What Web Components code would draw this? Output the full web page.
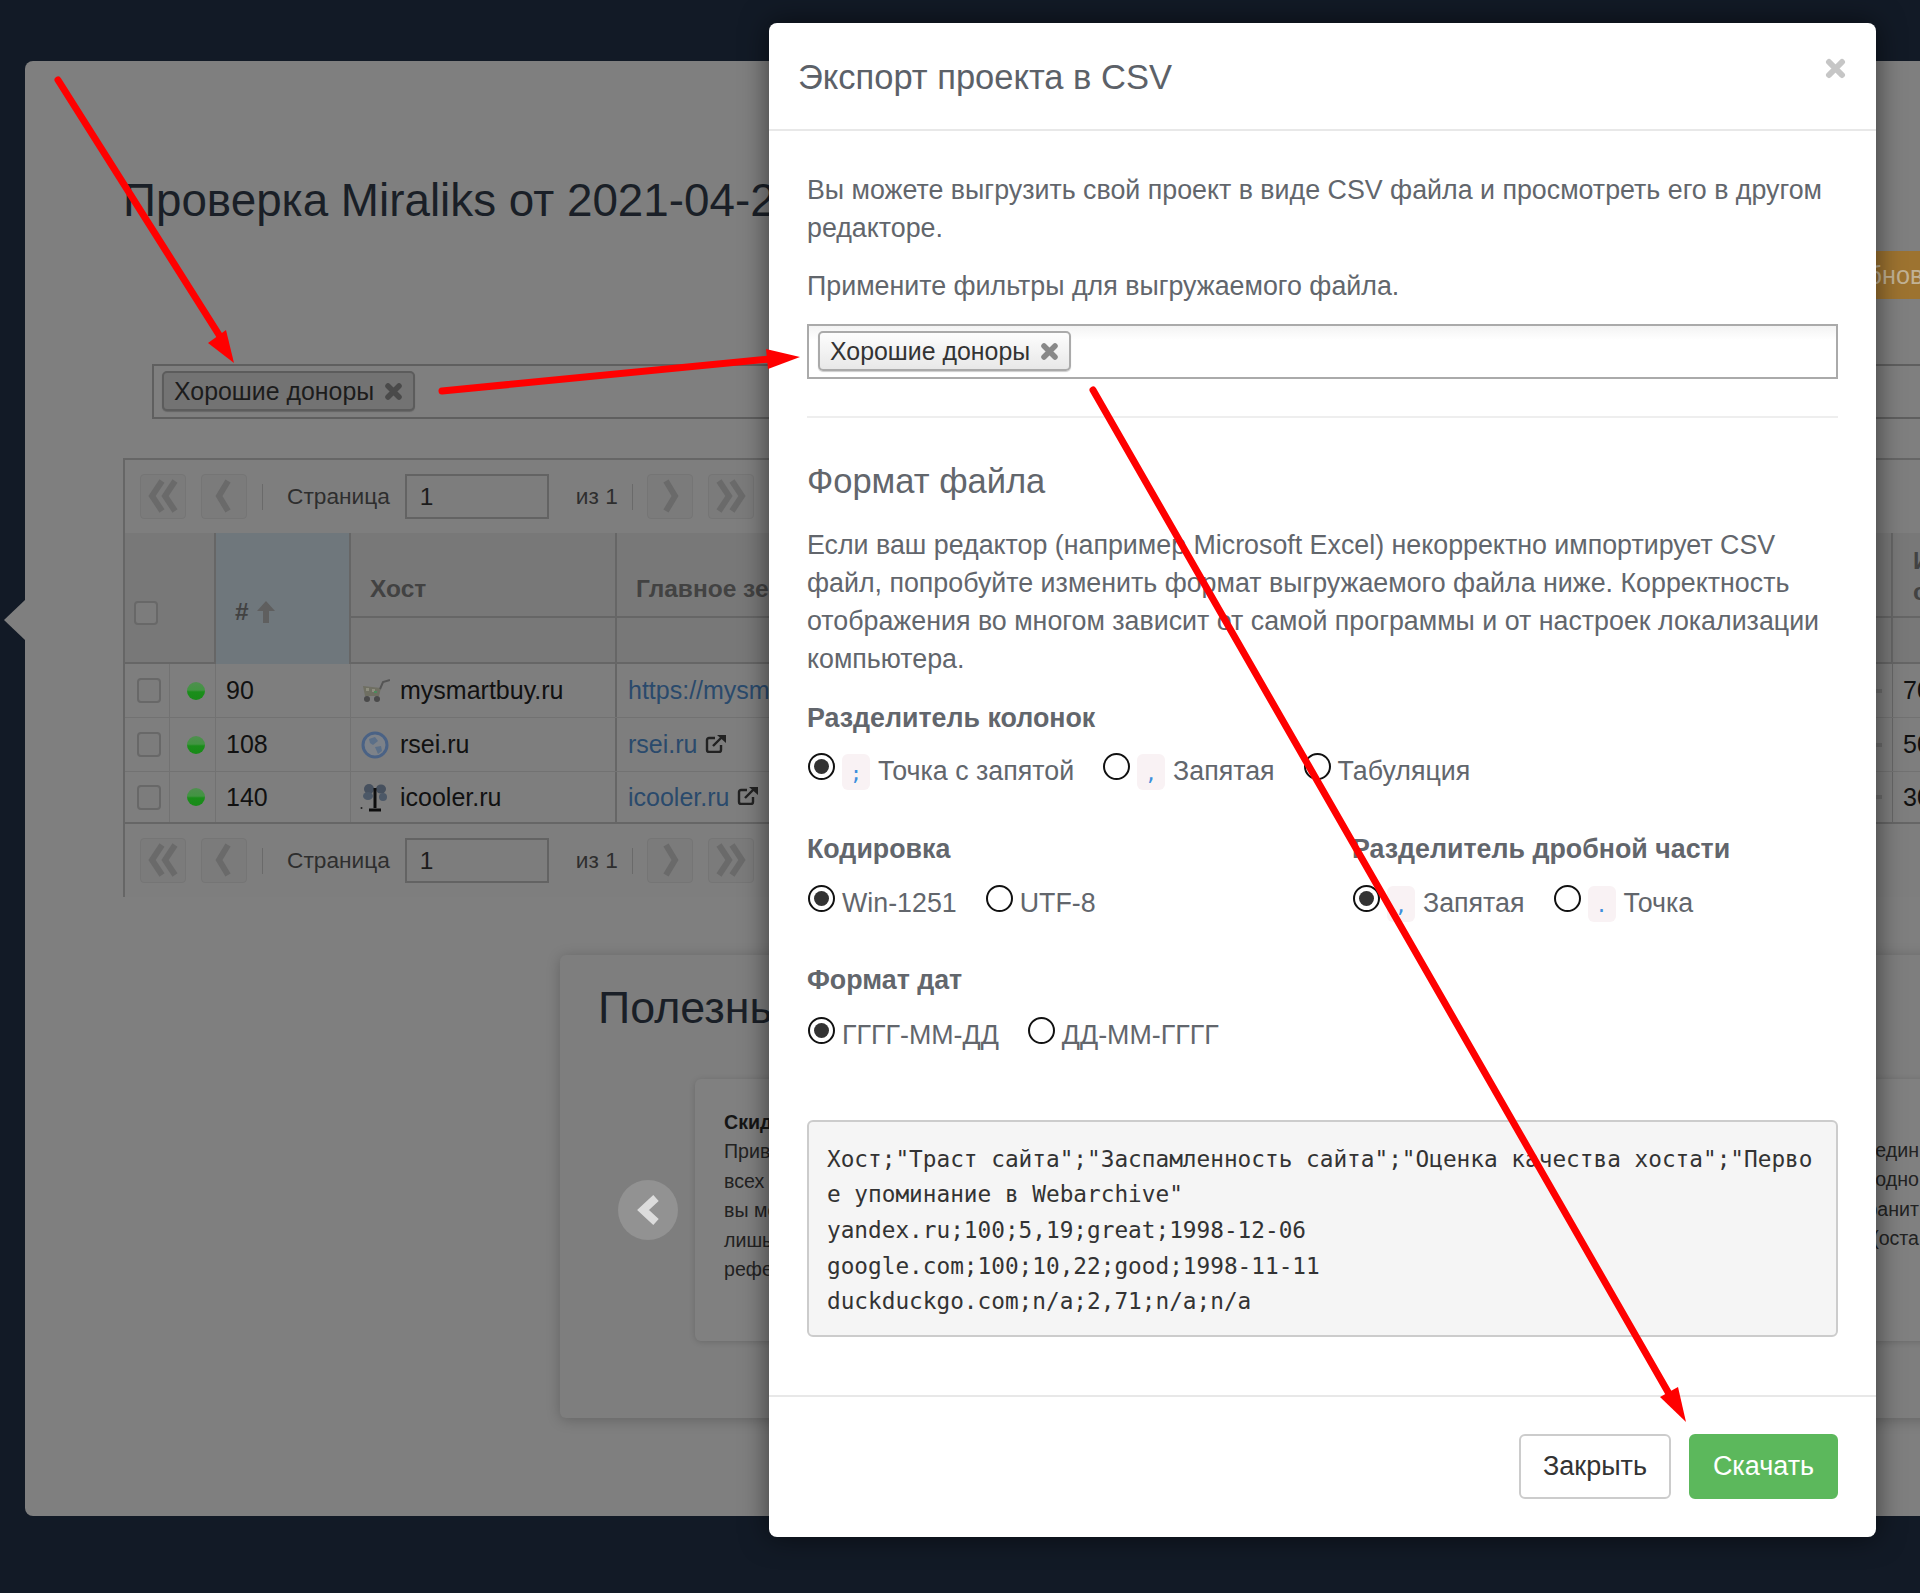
<!DOCTYPE html>
<html lang="ru">
<head>
<meta charset="utf-8">
<title>Экспорт проекта в CSV</title>
<style>
html, body { margin: 0; padding: 0; }
body {
    width: 1920px;
    height: 1593px;
    overflow: hidden;
    position: relative;
    background: #121a26;
    font-family: "Liberation Sans", Arial, sans-serif;
}
</style>
</head>
<body>

<page-shell>
    <h1 slot="title">Проверка Miraliks от 2021-04-28</h1>
    <tag-box slot="filter" variant="dim"><tag-chip variant="dim">Хорошие доноры</tag-chip></tag-box>
    <data-table slot="table">
        <pager-bar></pager-bar>
        <table-head></table-head>
        <data-row num="90" host="mysmartbuy.ru" link="https://mysmartbuy.ru" icon="cart" last="70" h="54"></data-row>
        <data-row num="108" host="rsei.ru" link="rsei.ru" icon="globe" last="50" h="54"></data-row>
        <data-row num="140" host="icooler.ru" link="icooler.ru" icon="fan" last="30" h="52"></data-row>
        <pager-bar foot></pager-bar>
    </data-table>
    <useful-card slot="useful"></useful-card>
</page-shell>

<export-modal>
    <p>Вы можете выгрузить свой проект в виде CSV файла и просмотреть его в другом редакторе.</p>
    <p>Примените фильтры для выгружаемого файла.</p>
    <tag-box><tag-chip>Хорошие доноры</tag-chip></tag-box>
    <hr>
    <h4>Формат файла</h4>
    <p class="long">Если ваш редактор (например Microsoft Excel) некорректно импортирует CSV файл, попробуйте изменить формат выгружаемого файла ниже. Корректность отображения во многом зависит от самой программы и от настроек локализации компьютера.</p>
    <field-group label="Разделитель колонок">
        <radio-opt checked code=";">Точка с запятой</radio-opt>
        <radio-opt code=",">Запятая</radio-opt>
        <radio-opt>Табуляция</radio-opt>
    </field-group>
    <div class="two">
        <field-group label="Кодировка">
            <radio-opt checked>Win-1251</radio-opt>
            <radio-opt>UTF-8</radio-opt>
        </field-group>
        <field-group label="Разделитель дробной части">
            <radio-opt checked code=",">Запятая</radio-opt>
            <radio-opt code=".">Точка</radio-opt>
        </field-group>
    </div>
    <field-group class="dates" label="Формат дат">
        <radio-opt checked>ГГГГ-ММ-ДД</radio-opt>
        <radio-opt>ДД-ММ-ГГГГ</radio-opt>
    </field-group>
    <pre>Хост;"Траст сайта";"Заспамленность сайта";"Оценка качества хоста";"Первое упоминание в Webarchive"
yandex.ru;100;5,19;great;1998-12-06
google.com;100;10,22;good;1998-11-11
duckduckgo.com;n/a;2,71;n/a;n/a</pre>
</export-modal>

<red-arrows></red-arrows>

<script>
//#region Icons
const ICONS = {
    cart: `<svg width="30" height="24" viewBox="0 0 30 24"><path d="M3 7 L21 9 L19 17 L5 17Z" fill="#6f6f62"/><path d="M6 9h3v3H6zM12 10h3v3h-3z" fill="#8d8d7e"/><path d="M14 12h3v2h-3z" fill="#4c8a5c"/><path d="M20 10 L23 3 L30 1" fill="none" stroke="#555" stroke-width="2"/><circle cx="7" cy="20" r="3" fill="#4a4a4a"/><circle cx="17" cy="20" r="3" fill="#4a4a4a"/></svg>`,
    globe: `<svg width="30" height="28" viewBox="-1 0 30 28"><circle cx="14" cy="14" r="12" fill="#7d8289" stroke="#4a6285" stroke-width="3"/><path d="M8 8 L14 6 L17 10 L12 14 L9 12Z M14 16 L20 15 L21 20 L17 23Z" fill="#5b6f88"/></svg>`,
    fan: `<svg width="30" height="30" viewBox="0 0 30 30"><ellipse cx="9" cy="7" rx="5" ry="5" fill="#46505e"/><ellipse cx="21" cy="7" rx="5" ry="4.500" fill="#46505e"/><ellipse cx="8" cy="14" rx="5" ry="4" fill="#4c5867"/><ellipse cx="23" cy="15" rx="4" ry="4" fill="#4c5867"/><path d="M15 6v20" stroke="#0e0e0e" stroke-width="3"/><path d="M9 28h12" stroke="#0e0e0e" stroke-width="3"/><circle cx="1.500" cy="26" r="1" fill="#222"/></svg>`
}
const EXT_ICON = `<svg width="22" height="19" viewBox="0 0 22 19" fill="none" stroke="#222" stroke-width="2.400"><path d="M10 4H4a2 2 0 0 0-2 2v10a2 2 0 0 0 2 2h10a2 2 0 0 0 2-2v-5"/><path d="M8 12 L18 2"/><path d="M12 1h9v8z" fill="#222" stroke="none"/></svg>`
//#endregion

class TagChip extends HTMLElement {
    constructor() {
        super()
        this.attachShadow({mode: 'open'}).innerHTML = `
<style>
:host {
    display: inline-flex;
    align-items: center;
    box-sizing: border-box;
    height: 40px;
    padding: 0 10px;
    gap: 10px;
    border: 2px solid #aaa;
    border-radius: 5px;
    background: linear-gradient(#fdfdfd, #e8e8e8);
    color: #333;
    font-size: 24.900px;
    box-shadow: 0 1px 1px rgba(0,0,0,.2);
}
:host([variant=dim]) {
    border-color: #5c5c5c;
    background: #737373;
    color: #1c1c1c;
}
svg { stroke: #888; margin-top: 1px; }
:host([variant=dim]) svg { stroke: #4a4a4a; }
</style>
<slot></slot>
<svg width="19" height="19" viewBox="0 0 19 19" fill="none" stroke-width="5.500" stroke-linecap="round"><path d="M4 4 L15 15 M15 4 L4 15"/></svg>`
    }
}
customElements.define('tag-chip', TagChip)

class TagBox extends HTMLElement {
    constructor() {
        super()
        this.attachShadow({mode: 'open'}).innerHTML = `
<style>
:host {
    display: flex;
    align-items: flex-start;
    box-sizing: border-box;
    height: 55px;
    padding: 5px 9px;
    border: 2px solid #aaa;
    background: linear-gradient(#f3f3f3, #fff 14px);
}
:host([variant=dim]) {
    padding-left: 8px;
    border-color: #5f5f5f;
    background: #7f7f7f;
    margin-left: 29px;
}
</style>
<slot></slot>`
    }
}
customElements.define('tag-box', TagBox)

class PagerBar extends HTMLElement {
    constructor() {
        super()
        const chev = (points) => `<svg width="46" height="45" viewBox="0 0 46 45" fill="none" stroke="#6a6a6a" stroke-width="6" stroke-linejoin="miter">${points.map(p => `<polyline points="${p}"/>`).join('')}</svg>`
        this.attachShadow({mode: 'open'}).innerHTML = `
<style>
:host {
    display: flex;
    align-items: center;
    height: 73px;
    padding-left: 15px;
    font-size: 22.700px;
    color: #2e2e2e;
}
.btn {
    box-sizing: border-box;
    width: 46px;
    height: 45px;
    margin-right: 15px;
    border: 1px solid #757575;
    border-radius: 4px;
    background: #7b7b7b;
}
.btn svg { display: block; margin: -1px; }
.sep { width: 1px; height: 26px; background: #6a6a6a; }
.page { margin: 0 15px 0 24px; }
input {
    box-sizing: border-box;
    width: 144px;
    height: 45px;
    padding: 0 13px;
    border: 2px solid #636363;
    background: #7d7d7d;
    font: inherit;
    font-size: 24.500px;
    color: #1c1c1c;
    outline: none;
}
.of { margin: 0 14px 0 27px; }
.sep2 { margin-right: 14px; }
</style>
<div class="btn">${chev(['22,7 12,22 22,37', '35,7 25,22 35,37'])}</div>
<div class="btn">${chev(['27,7 18,22 27,37'])}</div>
<div class="sep"></div>
<span class="page">Страница</span>
<input value="1">
<span class="of">из 1</span>
<div class="sep sep2"></div>
<div class="btn">${chev(['19,7 28,22 19,37'])}</div>
<div class="btn">${chev(['11,7 21,22 11,37', '24,7 34,22 24,37'])}</div>`
    }
}
customElements.define('pager-bar', PagerBar)

class TableHead extends HTMLElement {
    constructor() {
        super()
        this.attachShadow({mode: 'open'}).innerHTML = `
<style>
:host {
    display: grid;
    grid-template-columns: 91px 135px 266px 1276px 140px;
    grid-template-rows: 85px 46px;
    box-sizing: border-box;
    height: 131px;
    background: #787878;
    border-bottom: 2px solid #666;
    font-size: 24.500px;
    font-weight: bold;
    color: #424242;
}
.cell { box-sizing: border-box; border-right: 2px solid #666; }
.sel { grid-row: 1 / 3; display: flex; align-items: flex-end; padding: 0 0 39px 9px; }
.box { width: 24px; height: 24px; box-sizing: border-box; border: 2px solid #686868; border-radius: 4px; background: #7c7c7c; }
.num { grid-row: 1 / 3; background: #6f777c; display: flex; align-items: flex-end; gap: 8px; padding: 0 0 38px 19px; }
.num svg { display: block; margin-bottom: 3px; }
.title { display: flex; align-items: flex-end; padding: 0 0 13px 19px; border-bottom: 2px solid #666; }
.sub { border-bottom: none; }
.last { line-height: 31px; padding: 12px 0 0 20px; border-bottom: 2px solid #666; border-right: none; }
</style>
<div class="cell sel"><div class="box"></div></div>
<div class="cell num">#<svg width="18" height="22" viewBox="0 0 18 22"><path d="M9 0 L18 10 H12 V22 H6 V10 H0Z" fill="#5f5f5f"/></svg></div>
<div class="cell title">Хост</div>
<div class="cell title">Главное зеркало</div>
<div class="cell last">Ин<br>си</div>
<div class="cell sub"></div>
<div class="cell sub"></div>
<div class="cell sub" style="border-right:none"></div>`
    }
}
customElements.define('table-head', TableHead)

class DataRow extends HTMLElement {
    connectedCallback() {
        const a = name => this.getAttribute(name)
        const isUrl = a('link').startsWith('http')
        this.attachShadow({mode: 'open'}).innerHTML = `
<style>
:host {
    display: grid;
    grid-template-columns: 45px 46px 135px 266px 1276px 140px;
    height: ${a('h')}px;
    box-sizing: border-box;
    border-bottom: 1px solid #727272;
    font-size: 25px;
    color: #111;
}
:host(:last-of-type) { border-bottom: 2px solid #666; }
.c { box-sizing: border-box; display: flex; align-items: center; border-right: 1px solid #727272; overflow: hidden; white-space: nowrap; }
.check { padding-left: 12px; }
.box { width: 24px; height: 25px; box-sizing: border-box; border: 2px solid #686868; border-radius: 4px; background: #7c7c7c; }
.dot {
    width: 18px;
    height: 18px;
    margin-left: 17px;
    border-radius: 50%;
    background: linear-gradient(#4f8f4f, #429442 45%, #1a8e1a 55%, #188a18);
}
.num { padding-left: 10px; }
.host { gap: 10px; padding-left: 9px; border-right: 2px solid #666; }
.host svg { flex: none; display: block; filter: blur(.4px); }
.link { padding: 0 10px 0 11px; gap: 8px; color: #2a4a6c; border-right: 1px solid #666; }
.link svg { display: block; margin-bottom: 3px; }
.link i { width: 8px; height: 4px; margin-left: auto; background: #6c6c6c; }
.last { padding-left: 10px; border-right: none; }
</style>
<div class="c check"><div class="box"></div></div>
<div class="c"><div class="dot"></div></div>
<div class="c num">${a('num')}</div>
<div class="c host">${ICONS[a('icon')]}<span>${a('host')}</span></div>
<div class="c link"><span>${a('link')}</span>${isUrl ? '' : EXT_ICON}<i></i></div>
<div class="c last">${a('last')}</div>`
    }
}
customElements.define('data-row', DataRow)

class DataTable extends HTMLElement {
    constructor() {
        super()
        this.attachShadow({mode: 'open'}).innerHTML = `
<style>
:host {
    display: block;
    width: 1900px;
    border-left: 2px solid #666;
    border-top: 2px solid #666;
    background: #7e7e7e;
}
</style>
<slot></slot>`
    }
}
customElements.define('data-table', DataTable)

class UsefulCard extends HTMLElement {
    constructor() {
        super()
        this.attachShadow({mode: 'open'}).innerHTML = `
<style>
:host {
    display: block;
    box-sizing: border-box;
    width: 1500px;
    height: 463px;
    margin-left: 437px;
    padding: 25px 0 0 38px;
    border-radius: 6px;
    background: #7e7e7e;
    box-shadow: 0 2px 14px rgba(0,0,0,.22);
    color: #1a1f27;
}
h2 { margin: 0 0 45px; font-size: 44.800px; line-height: 54px; font-weight: normal; }
.row { display: flex; align-items: center; gap: 17px; }
.prev {
    flex: none;
    width: 60px;
    height: 60px;
    margin-left: 20px;
    border-radius: 50%;
    background: #929292;
    display: flex;
    align-items: center;
    justify-content: center;
}
.slide {
    box-sizing: border-box;
    display: grid;
    grid-template-columns: 1100px 124px;
    width: 1400px;
    height: 262px;
    padding-top: 29px;
    border-radius: 6px;
    background: #808080;
    box-shadow: 0 1px 6px rgba(0,0,0,.16);
    font-size: 19.600px;
    line-height: 29.400px;
    color: #222;
    white-space: nowrap;
}
.slide > div:first-child { padding-left: 29px; }
.right { text-align: right; padding-top: 28px; }
b { color: #151515; }
</style>
<h2>Полезные материалы</h2>
<div class="row">
    <div class="prev"><svg width="26" height="32" viewBox="0 0 26 32" fill="none" stroke="#dcdcdc" stroke-width="8"><polyline points="21,4 8,16 21,28"/></svg></div>
    <div class="slide">
        <div><b>Скидка за рефералов</b><br>Приведите друзей на сервис, и для<br>всех них будет действовать скидка,<br>вы можете получить бонусы, нужно<br>лишь поделиться своей<br>реферальной ссылкой</div>
        <div class="right">объедин<br>сходно<br>хранит<br>(оста</div>
    </div>
</div>`
    }
}
customElements.define('useful-card', UsefulCard)

class PageShell extends HTMLElement {
    constructor() {
        super()
        this.attachShadow({mode: 'open'}).innerHTML = `
<style>
:host {
    display: block;
    position: relative;
    box-sizing: border-box;
    width: 2000px;
    height: 1455px;
    margin: 61px 0 0 25px;
    padding: 113px 0 0 98px;
    border-radius: 8px 0 0 8px;
    background: #7f7f7f;
    color: #1a1f27;
}
.handle {
    position: absolute;
    left: -21px;
    top: 539px;
    width: 21px;
    height: 40px;
    background: #7f7f7f;
    clip-path: polygon(0 50%, 100% 0, 100% 100%);
}
::slotted(h1) {
    margin: 0;
    font-size: 45.800px;
    line-height: 54px;
    font-weight: normal;
    white-space: nowrap;
}
.actions { height: 48px; margin: 23px 0 65px 1705px; }
.update {
    display: inline-block;
    box-sizing: border-box;
    height: 48px;
    padding: 0 20px;
    line-height: 48px;
    background: #9d7330;
    border-radius: 5px;
    font-size: 25.200px;
    color: #c2b295;
}
.filter { margin-bottom: 39px; }
.useful { margin-top: 58px; }
</style>
<div class="handle"></div>
<slot name="title"></slot>
<div class="actions"><div class="update">Обновить</div></div>
<div class="filter"><slot name="filter"></slot></div>
<slot name="table"></slot>
<div class="useful"><slot name="useful"></slot></div>`
    }
}
customElements.define('page-shell', PageShell)

class RadioOpt extends HTMLElement {
    connectedCallback() {
        const code = this.getAttribute('code')
        this.attachShadow({mode: 'open'}).innerHTML = `
<style>
:host {
    display: inline-flex;
    align-items: flex-start;
    height: 37px;
    font-size: 26.800px;
    color: #62666c;
    white-space: nowrap;
}
.ring {
    box-sizing: border-box;
    width: 27px;
    height: 27px;
    margin-right: 7px;
    border: 2px solid #111;
    border-radius: 50%;
    background: #fff;
    display: flex;
    align-items: center;
    justify-content: center;
}
:host([checked]) .ring::after {
    content: '';
    width: 15px;
    height: 15px;
    border-radius: 50%;
    background: #333;
}
.code {
    box-sizing: border-box;
    width: 28px;
    height: 36px;
    margin: 1px 8px 0 0;
    border-radius: 6px;
    background: #f9f2f4;
    color: #3d8fdc;
    font-family: "DejaVu Sans Mono", monospace;
    font-size: 20px;
    line-height: 38px;
    text-align: center;
}
.label { line-height: 37px; }
</style>
<div class="ring"></div>
${code ? `<div class="code">${code}</div>` : ''}
<span class="label"><slot></slot></span>`
    }
}
customElements.define('radio-opt', RadioOpt)

class FieldGroup extends HTMLElement {
    connectedCallback() {
        this.attachShadow({mode: 'open'}).innerHTML = `
<style>
:host { display: block; height: 131px; }
.label {
    height: 38px;
    line-height: 38px;
    font-size: 26.800px;
    font-weight: bold;
    color: #62666c;
    white-space: nowrap;
}
.opts { display: flex; gap: 29px; margin-top: var(--opts-top, 16px); padding-left: 1px; }
</style>
<div class="label">${this.getAttribute('label')}</div>
<div class="opts"><slot></slot></div>`
    }
}
customElements.define('field-group', FieldGroup)

class ExportModal extends HTMLElement {
    constructor() {
        super()
        this.attachShadow({mode: 'open'}).innerHTML = `
<style>
:host {
    display: block;
    position: absolute;
    left: 769px;
    top: 23px;
    box-sizing: border-box;
    width: 1107px;
    height: 1514px;
    border-radius: 8px;
    background: #fff;
    box-shadow: 0 0 28px rgba(0,0,0,.55);
}
header {
    display: flex;
    justify-content: space-between;
    box-sizing: border-box;
    height: 108px;
    padding: 35px 30px 0 29px;
    border-bottom: 2px solid #e8e8e8;
}
h3 { margin: 0; font-size: 34.500px; line-height: 38px; font-weight: normal; color: #5c6168; }
main { box-sizing: border-box; height: 1264px; padding: 41px 38px 0 38px; }
footer {
    display: flex;
    justify-content: flex-end;
    gap: 18px;
    padding: 37px 38px 0 0;
    border-top: 2px solid #e8e8e8;
}
button {
    box-sizing: border-box;
    height: 65px;
    border-radius: 6px;
    font: inherit;
    font-size: 27px;
}
.close { width: 152px; border: 2px solid #ccc; background: #fff; color: #333; }
.save { width: 149px; border: 2px solid #5cb85c; background: #5cb85c; color: #fff; }
</style>
<header>
    <h3>Экспорт проекта в CSV</h3>
    <svg width="21" height="21" viewBox="0 0 21 21" fill="none" stroke="#c6c6c6" stroke-width="6" stroke-linecap="round"><path d="M4 4 L17 17 M17 4 L4 17"/></svg>
</header>
<main><slot></slot></main>
<footer>
    <button class="close">Закрыть</button>
    <button class="save">Скачать</button>
</footer>`
    }
}
customElements.define('export-modal', ExportModal)

class RedArrows extends HTMLElement {
    constructor() {
        super()
        this.attachShadow({mode: 'open'}).innerHTML = `
<style>
:host { position: absolute; left: 0; top: 0; width: 1920px; height: 1593px; pointer-events: none; }
svg { display: block; }
</style>
<svg width="1920" height="1593" viewBox="0 0 1920 1593">
    <g stroke="#f00" stroke-width="7" stroke-linecap="round" fill="none">
        <path d="M58 80 L221 338"/>
        <path d="M442 391 L770 359"/>
        <path d="M1093 390 L1668 1392"/>
    </g>
    <g fill="#f00">
        <polygon points="234,363 208,343 226,330"/>
        <polygon points="800,357 766,349 768,369"/>
        <polygon points="1686,1422 1660,1397 1678,1387"/>
    </g>
</svg>`
    }
}
customElements.define('red-arrows', RedArrows)
</script>

<style>
export-modal p { margin: 0 0 20px; font-size: 26.800px; line-height: 37.800px; color: #62666c; }
export-modal tag-box { margin: -1px 0 37px; }
export-modal hr { height: 2px; margin: 0 0 44px; border: 0; background: #eee; }
export-modal h4 { margin: 0 0 27px; font-size: 34.500px; line-height: 38px; font-weight: normal; color: #62666c; }
export-modal .long { margin-bottom: 20px; }
export-modal .two { display: grid; grid-template-columns: 545px 1fr; --opts-top: 17px; }
export-modal .dates { --opts-top: 18px; }
export-modal pre {
    box-sizing: border-box;
    height: 217px;
    margin: 28px 0 0;
    padding: 20px 18px 18px;
    border: 2px solid #ccc;
    border-radius: 6px;
    background: #f5f5f5;
    color: #333;
    font-family: "DejaVu Sans Mono", monospace;
    font-size: 22.740px;
    line-height: 35.700px;
    white-space: pre-wrap;
    word-break: break-all;
}
</style>
</body>
</html>
